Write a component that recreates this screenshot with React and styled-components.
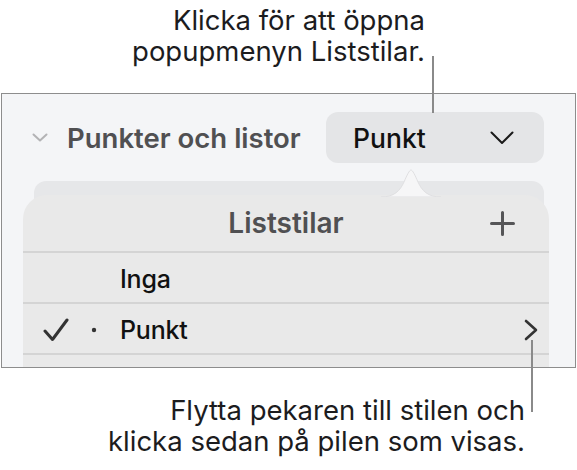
import React from "react";
import styled, { createGlobalStyle } from "styled-components";

const Global = createGlobalStyle`
  html, body { margin: 0; padding: 0; background: #ffffff; }
  body { font-family: Inter, "Noto Sans", sans-serif; -webkit-font-smoothing: antialiased; }
`;

const Page = styled.div`
  position: relative;
  width: 577px;
  height: 470px;
  overflow: hidden;
  display: flex;
  flex-direction: column;
`;

const Callout = styled.div`
  width: ${(p) => p.$right}px;
  box-sizing: border-box;
  padding-top: ${(p) => p.$top}px;
  text-align: right;
  font-size: 27.5px;
  line-height: 31px;
  font-weight: 400;
  color: #1c1c1e;
  white-space: nowrap;
`;

const Leader = styled.div`
  position: absolute;
  left: ${(p) => p.$x}px;
  top: ${(p) => p.$top}px;
  width: 2px;
  height: ${(p) => p.$h}px;
  background: #8a8a8a;
  z-index: 5;
`;

const Panel = styled.div`
  position: relative;
  box-sizing: border-box;
  margin: 26px 0 0 1px;
  width: 575px;
  height: 275px;
  border: 1px solid #8d8d8d;
  background: #f4f5f7;
  overflow: hidden;
  display: flex;
  flex-direction: column;
`;

const SectionHeader = styled.div`
  display: flex;
  align-items: center;
  padding: 18px 31px 0 30px;
`;

const Disclosure = styled.svg`
  width: 16px;
  height: 9px;
  flex: none;
  margin-right: 19px;
`;

const SectionTitle = styled.div`
  font-size: 27.5px;
  font-weight: 600;
  color: #505052;
  white-space: nowrap;
`;

const PopupButton = styled.div`
  margin-left: auto;
  width: 218px;
  height: 51px;
  box-sizing: border-box;
  border-radius: 12px;
  background: #e4e5e7;
  display: flex;
  align-items: center;
  justify-content: space-between;
  padding: 0 30px 0 27px;
  font-size: 26.5px;
  font-weight: 500;
  color: #111;
`;

const ListBox = styled.div`
  margin: 18px 31px 0 32px;
  flex: 1;
  border-radius: 12px;
  background: #e6e7e9;
`;

const Popover = styled.div`
  position: absolute;
  left: 21px;
  top: 101px;
  width: 526px;
  height: 240px;
  border-radius: 24px;
  background: #e9e9e9;
  display: flex;
  flex-direction: column;
`;

const Arrow = styled.svg`
  position: absolute;
  left: ${(p) => p.$x}px;
  top: -29px;
  width: 60px;
  height: 31px;
`;

const MenuHeader = styled.div`
  position: relative;
  height: 56px;
  display: flex;
  align-items: center;
  justify-content: center;
  font-size: 28px;
  font-weight: 600;
  color: #505052;
  border-bottom: 2px solid #d4d4d4;
`;

const AddIcon = styled.svg`
  position: absolute;
  right: 34px;
  top: 16px;
  width: 25px;
  height: 25px;
`;

const MenuRow = styled.div`
  box-sizing: border-box;
  height: 51px;
  padding-top: 3px;
  display: flex;
  align-items: center;
  border-bottom: 2px solid #d4d4d4;
  font-size: 25px;
  font-weight: 500;
  color: #111;
  letter-spacing: -0.2px;
`;

const CheckCell = styled.div`
  width: 97px;
  flex: none;
  display: flex;
  align-items: center;
  padding-left: 20px;
  box-sizing: border-box;
  gap: 22px;
`;

const RowLabel = styled.div`
  flex: 1;
`;

const RowChevron = styled.svg`
  width: 16px;
  height: 22px;
  margin-right: 10px;
`;

export default function App() {
  return (
    <Page>
      <Global />
      <Callout $right={425} $top={5}>
        Klicka för att öppna
        <br />
        popupmenyn Liststilar.
      </Callout>
      <Leader $x={432} $top={56} $h={57} />
      <Panel>
        <SectionHeader>
          <Disclosure viewBox="0 0 16 9">
            <path d="M1.5 1.5 L8 7.5 L14.5 1.5" fill="none" stroke="#b3b3b5" strokeWidth="2" strokeLinecap="round" strokeLinejoin="round" />
          </Disclosure>
          <SectionTitle>Punkter och listor</SectionTitle>
          <PopupButton>
            <span>Punkt</span>
            <svg width="24" height="14" viewBox="0 0 24 14">
              <path d="M1.5 1.5 L12 12 L22.5 1.5" fill="none" stroke="#1a1a1a" strokeWidth="2" strokeLinecap="round" strokeLinejoin="round" />
            </svg>
          </PopupButton>
        </SectionHeader>
        <ListBox />
        <Popover>
          <Arrow $x={358} viewBox="0 0 60 31">
            <path d="M0 31 C 13 31, 19 25, 23 16 C 26 9, 28.5 4, 30 4 C 31.5 4, 34 9, 37 16 C 41 25, 47 31, 60 31 Z" fill="#f6f6f7" stroke="#e0e0e2" strokeWidth="1" />
          </Arrow>
          <MenuHeader>
            Liststilar
            <AddIcon viewBox="0 0 25 25">
              <path d="M12.5 1.5 V23.5 M1.5 12.5 H23.5" stroke="#555557" strokeWidth="3" strokeLinecap="round" />
            </AddIcon>
          </MenuHeader>
          <MenuRow>
            <CheckCell />
            <RowLabel>Inga</RowLabel>
          </MenuRow>
          <MenuRow>
            <CheckCell>
              <svg width="26" height="24" viewBox="0 0 26 24">
                <path d="M2 13 L9.5 21.5 L24 2" fill="none" stroke="#333" strokeWidth="3" strokeLinecap="round" strokeLinejoin="round" />
              </svg>
              <svg width="6" height="6" viewBox="0 0 6 6">
                <circle cx="3" cy="3" r="2.2" fill="#333" />
              </svg>
            </CheckCell>
            <RowLabel>Punkt</RowLabel>
            <RowChevron viewBox="0 0 16 22">
              <path d="M3 2 L13 11 L3 20" fill="none" stroke="#333" strokeWidth="2.6" strokeLinecap="round" strokeLinejoin="round" />
            </RowChevron>
          </MenuRow>
          <MenuRow />
        </Popover>
      </Panel>
      <Leader $x={531} $top={340} $h={72} />
      <Callout $right={525} $top={27}>
        Flytta pekaren till stilen och
        <br />
        klicka sedan på pilen som visas.
      </Callout>
    </Page>
  );
}
